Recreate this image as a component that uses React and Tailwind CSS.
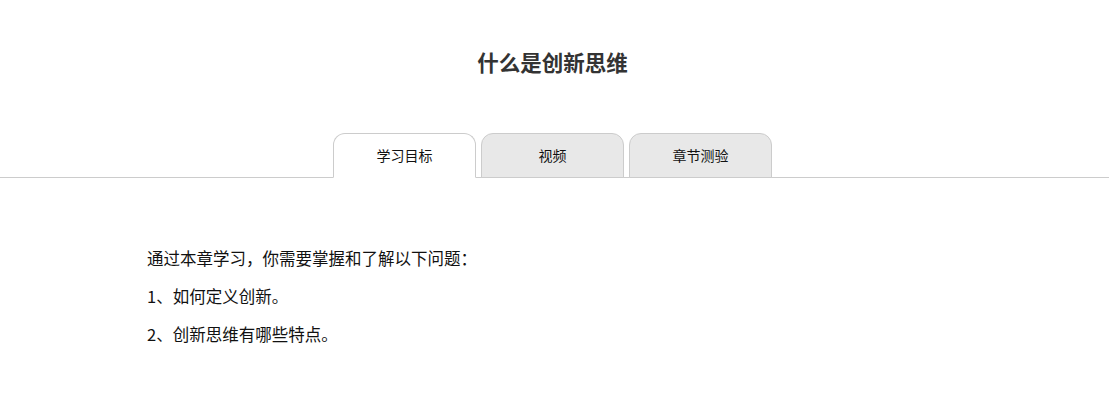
import React, { useState } from "react";

const tabs = ["学习目标", "视频", "章节测验"];

const App = () => {
  const [active, setActive] = useState(0);
  const font = {
    fontFamily: '"Microsoft YaHei", "Noto Sans CJK SC", sans-serif',
  };

  return (
    <div className="min-h-screen bg-white text-[#333]" style={font}>
      <h1 className="pt-[47px] pr-[4px] text-center text-[21.5px] font-bold leading-[30px] text-[#333]">
        什么是创新思维
      </h1>
      <div className="mt-[56px] flex justify-center gap-[5px] border-b border-[#cccccc] pr-[4px]">
        {tabs.map((t, i) => (
          <button
            key={t}
            onClick={() => setActive(i)}
            className={`-mb-px h-[45px] w-[143px] rounded-t-[12px] border border-[#cccccc] text-[14px] text-[#111] ${
              active === i ? "border-b-white bg-white" : "bg-[#e8e8e8]"
            }`}
          >
            {t}
          </button>
        ))}
      </div>
      <div className="pl-[147px] pt-[61px] text-[16.5px] leading-[38px] text-[#111]">
        <p>通过本章学习，你需要掌握和了解以下问题：</p>
        <p>1、如何定义创新。</p>
        <p>2、创新思维有哪些特点。</p>
      </div>
    </div>
  );
};

export default App;
